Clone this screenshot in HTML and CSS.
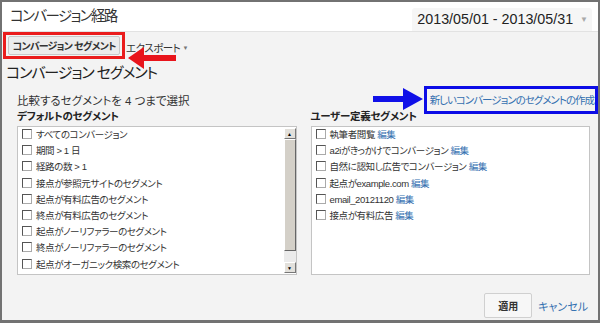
FILE: index.html
```html
<!DOCTYPE html>
<html lang="ja">
<head>
  <meta charset="UTF-8" />
  <title>コンバージョン経路</title>
  <link rel="stylesheet" href="styles.css">
</head>
<body>
  <div class="page">
    <div class="header">
      <div class="title">コンバージョン経路</div>
      <div class="dateBox">2013/05/01 - 2013/05/31 <span class="caret">&#9660;</span></div>
    </div>

    <div class="toolbar">
      <span class="markRed"><button class="tabBtn">コンバージョン セグメント</button></span>
      <span class="export">エクスポート <span class="smallCaret">&#9660;</span></span>
    </div>

    <!-- 注釈の矢印 -->
    <svg class="arrowRed" width="50" height="22" viewBox="0 0 50 22">
      <polygon points="0,11 16,0 16,8 48,8 48,14 16,14 16,22" fill="#e8141b" />
    </svg>
    <svg class="arrowBlue" width="52" height="22" viewBox="0 0 52 22">
      <polygon points="50,11 30,0 30,8 0,8 0,14 30,14 30,22" fill="#1010e8" />
    </svg>

    <h2 class="heading">コンバージョン セグメント</h2>

    <div class="descRow">
      <span class="desc">比較するセグメントを 4 つまで選択</span>
      <span class="markBlue"><a class="link">新しいコンバージョンのセグメントの作成</a></span>
    </div>

    <div class="columns">
      <div class="col">
        <div class="colTitle">デフォルトのセグメント</div>
        <div class="listBox">
          <div class="items" id="defaultList"></div>
          <div class="scrollbar">
            <div class="sbBtn">&#9650;</div>
            <div class="sbThumb"></div>
            <div class="sbTrack"></div>
            <div class="sbBtn">&#9660;</div>
          </div>
        </div>
      </div>
      <div class="col">
        <div class="colTitle">ユーザー定義セグメント</div>
        <div class="listBox">
          <div class="items" id="userList"></div>
        </div>
      </div>
    </div>

    <div class="footer">
      <button class="applyBtn">適用</button>
      <a class="link cancel">キャンセル</a>
    </div>
  </div>

  <script>
    const defaults = [
      'すべてのコンバージョン',
      '期間 &gt; 1 日',
      '経路の数 &gt; 1',
      '接点が参照元サイトのセグメント',
      '起点が有料広告のセグメント',
      '終点が有料広告のセグメント',
      '起点がノーリファラーのセグメント',
      '終点がノーリファラーのセグメント',
      '起点がオーガニック検索のセグメント'
    ];
    const userSegs = [
      '執筆者閲覧',
      'a2iがきっかけでコンバージョン',
      '自然に認知し広告でコンバージョン',
      '起点がexample.com',
      'email_20121120',
      '接点が有料広告'
    ];

    function addRow(list, text, edit) {
      const row = document.createElement('div');
      row.className = 'row';
      row.innerHTML = '<span class="check"></span><span>' + text + '</span>';
      if (edit) row.innerHTML += ' <a class="link">編集</a>';
      list.appendChild(row);
    }

    const defaultList = document.getElementById('defaultList');
    const userList = document.getElementById('userList');
    defaults.forEach(t => addRow(defaultList, t, false));
    userSegs.forEach(t => addRow(userList, t, true));
  </script>
</body>
</html>
```

FILE: styles.css
```css
html, body { margin: 0; padding: 0; }
body {
  font-family: "Liberation Sans", "Noto Sans CJK JP", sans-serif;
  font-feature-settings: "palt";
  color: #333;
  background: #fff;
}
.page {
  position: relative;
  width: 600px;
  height: 323px;
  box-sizing: border-box;
  border: 2px solid #727272;
  border-bottom-width: 3px;
  background: #f3f3f3;
}
.header {
  height: 29px;
  background: #fff;
  border-bottom: 1px solid #e2e2e2;
  display: flex;
  justify-content: space-between;
  padding: 0 6px 0 8px;
}
.title { font-size: 14.5px; letter-spacing: -1.6px; line-height: 29px; color: #333; }
.dateBox {
  align-self: flex-end;
  height: 23px;
  line-height: 23px;
  padding: 0 4px 0 5px;
  background: #f6f6f6;
  border-radius: 3px 3px 0 0;
  font-size: 14.3px;
  color: #222;
  white-space: nowrap;
}
.caret { font-size: 8px; color: #aaa; vertical-align: 2px; margin-left: 3px; }
.toolbar {
  display: flex;
  align-items: flex-start;
  height: 28px;
  padding-left: 1px;
}
.markRed {
  display: inline-block;
  border: 3px solid #ea1c1c;
  padding: 1px 2px;
}
.tabBtn {
  display: block;
  font-family: inherit;
  font-feature-settings: "palt";
  font-size: 10px;
  letter-spacing: -0.8px;
  font-weight: bold;
  color: #333;
  height: 19px;
  width: 112px;
  padding: 0;
  background: #ececec;
  border: 1px solid #c8c8c8;
  border-radius: 2px;
}
.export { font-size: 10.5px; letter-spacing: -0.5px; margin: 8px 0 0 1px; color: #333; }
.smallCaret { font-size: 6px; color: #777; vertical-align: 2px; }
.arrowRed { position: absolute; left: 126px; top: 45px; }
.arrowBlue { position: absolute; left: 371px; top: 86px; }
.heading {
  margin: 3px 0 0 4px;
  font-size: 15px;
  letter-spacing: -1.1px;
  font-weight: normal;
  color: #222;
  line-height: 20px;
}
.descRow {
  display: flex;
  justify-content: space-between;
  align-items: center;
  height: 16px;
  margin-top: 9px;
  padding: 0 0 0 15px;
}
.desc { font-size: 11.5px; color: #333; }
.markBlue {
  display: inline-block;
  border: 3px solid #0c0ce6;
  padding: 3px 1px 4px 3px;
  line-height: 14px;
}
.link { color: #3470b0; cursor: pointer; }
.markBlue .link { font-size: 10.5px; letter-spacing: -1px; }
.columns {
  display: flex;
  gap: 14px;
  padding: 0 8px 0 15px;
}
.col { flex: 1; }
.colTitle {
  font-size: 10.5px;
  letter-spacing: -0.3px;
  font-weight: bold;
  color: #222;
  line-height: 14px;
  margin: 1px 0 3px;
}
.listBox {
  display: flex;
  height: 149px;
  box-sizing: border-box;
  background: #fff;
  border: 1px solid #c4c4c4;
}
.items { flex: 1; padding: 0 0 0 4px; }
.row {
  font-size: 9.5px;
  letter-spacing: -0.4px;
  line-height: 16.2px;
  height: 16.2px;
  white-space: nowrap;
  color: #333;
}
.check {
  display: inline-block;
  width: 8px;
  height: 8px;
  border: 1px solid;
  border-color: #555 #aaa #aaa #555;
  background: #fff;
  margin-right: 4px;
  vertical-align: -1px;
}
.scrollbar {
  width: 12px;
  display: flex;
  flex-direction: column;
  margin: 1px 0 1px 0;
}
.sbBtn {
  height: 11px;
  font-size: 5px;
  line-height: 10px;
  text-align: center;
  color: #000;
  background: #e2e0db;
  border: 1px solid;
  border-color: #fff #777 #777 #fff;
  box-sizing: border-box;
}
.sbThumb {
  height: 112px;
  background: #d4d0c8;
  border: 1px solid;
  border-color: #fff #666 #666 #fff;
  box-sizing: border-box;
}
.sbTrack { flex: 1; background: #ebebeb; }
.footer {
  display: flex;
  justify-content: flex-end;
  align-items: center;
  padding: 18px 10px 0 0;
}
.applyBtn {
  font-family: inherit;
  font-size: 10px;
  font-weight: bold;
  color: #333;
  width: 48px;
  height: 25px;
  background: #f7f7f7;
  border: 1px solid #d0d0d0;
  border-radius: 2px;
  margin-right: 6px;
}
.cancel { font-size: 11px; }
```
